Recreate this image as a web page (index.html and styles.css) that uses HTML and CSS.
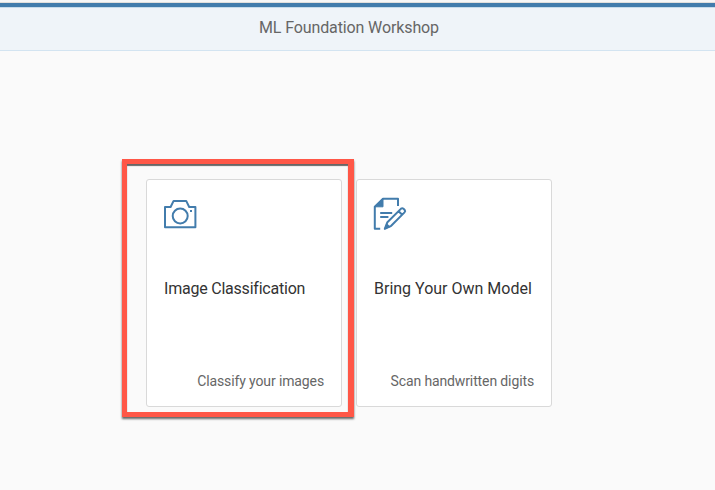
FILE: index.html
```
<!DOCTYPE html>
<html lang="en">
<head>
<meta charset="utf-8">
<title>ML Foundation Workshop</title>
<link rel="stylesheet" href="styles.css">
</head>
<body>
<header class="header"><h1 class="heading">ML Foundation Workshop</h1></header>
<main class="tiles">
  <section class="tile">
    <svg class="icon" viewBox="0 0 36 36" fill="none" stroke="currentColor" stroke-width="2" stroke-linejoin="round">
      <path d="M2 11H7.6L10.6 4.9H23.2L26.2 11H32.4V31.2H2Z"/>
      <circle cx="17.2" cy="20" r="7.5"/>
      <rect x="27" y="14" width="2" height="2" fill="currentColor" stroke="none"/>
    </svg>
    <h2 class="title image-title">Image Classification</h2>
    <p class="note image-note">Classify your images</p>
    <div class="highlight"></div>
  </section>
  <section class="tile">
    <svg class="icon" viewBox="0 0 36 36" fill="none" stroke="currentColor" stroke-width="2" stroke-linejoin="round">
      <path d="M25 10V2.7H10L1.8 10.8V32.8H7.2"/>
      <path d="M10 2.7V10.8H1.8Z" fill="currentColor" stroke-width="1"/>
      <path d="M7.2 17H19.2M7.2 21H15.4" stroke-width="1.8"/>
      <path d="M11.8 32.8L14.4 26.2L28.1 12.6Q29.3 11.7 30.5 12.8L31.7 14Q32.7 15.2 31.5 16.4L18.2 29.8ZM25.6 15.2L29.2 18.7"/>
      <path d="M11 33.5L13.5 27L17.7 31Z" fill="currentColor" stroke="none"/>
    </svg>
    <h2 class="title model-title">Bring Your Own Model</h2>
    <p class="note model-note">Scan handwritten digits</p>
  </section>
</main>
</body>
</html>
```
FILE: styles.css
```
* { box-sizing: border-box; }
body {
  margin: 0;
  height: 490px;
  overflow: hidden;
  background: #fafafa;
  font-family: Roboto, "Liberation Sans", sans-serif;
}
.header {
  height: 51px;
  margin-bottom: 128px;
  padding-top: 18px;
  background: linear-gradient(#f7f7f7 0 2px, #e2dfdc 2px 3px, #427cac 3px 7px, #c8dbea 7px 8px, #eff4f9 8px 50px, #d3e4f1 50px);
}
.heading {
  width: max-content;
  margin: 0 0 0 259px;
  color: #666;
  font-size: 16px;
  font-weight: 400;
  line-height: 20px;
  letter-spacing: -0.12px;
}
.tiles { display: flex; gap: 14px; padding-left: 146px; }
.tile {
  position: relative;
  display: flex;
  flex-direction: column;
  width: 196px;
  height: 228px;
  padding: 16px 17px;
  border: 1px solid #d9d9d9;
  border-radius: 3px;
  background: #fff;
}
.icon { width: 36px; height: 36px; margin-left: -1px; color: #427cac; }
.title {
  width: max-content;
  margin: 47px 0 0;
  color: #333;
  font-size: 16px;
  font-weight: 400;
  line-height: 20px;
}
.image-title { letter-spacing: -0.22px; }
.note {
  width: max-content;
  margin: auto 0 0 auto;
  color: #666;
  font-size: 14px;
  line-height: 18px;
  letter-spacing: -0.12px;
}
.highlight {
  position: absolute;
  top: -21px;
  left: -25px;
  width: 232px;
  height: 258px;
  border: solid #ff5747;
  border-width: 5px 6px 5px 5px;
  box-shadow: 0 2px 2px #666, inset 0 2px 1px #666;
}
```
